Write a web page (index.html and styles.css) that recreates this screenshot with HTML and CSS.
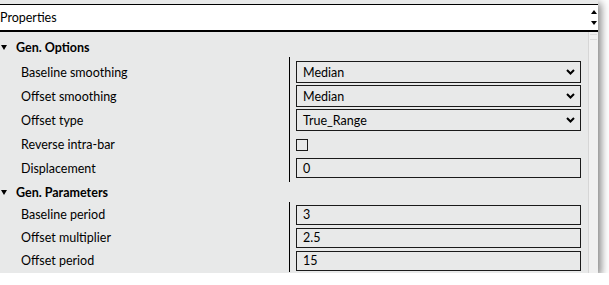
FILE: index.html
```html
<!DOCTYPE html>
<html lang="en">
<head>
    <meta charset="UTF-8">
    <title>Properties</title>
    <link rel="stylesheet" href="styles.css">
</head>
<body>
    <div class="window">
        <div class="top-strip"></div>
        <div class="header">
            <span class="title">Properties</span>
            <div class="spin">
                <span class="arrow-up"></span>
                <span class="arrow-down"></span>
            </div>
        </div>
        <div class="main">
            <div class="grid">
                <div class="group first">
                    <div class="group-head"><span class="tri"></span>Gen. Options</div>
                    <div class="props">
                        <div class="prop">
                            <div class="label">Baseline smoothing</div>
                            <div class="value"><div class="select">Median<svg class="chev" width="9" height="6" viewBox="0 0 9 6"><path d="M1 1 L4.5 4.5 L8 1" fill="none" stroke="#000" stroke-width="2"/></svg></div></div>
                        </div>
                        <div class="prop">
                            <div class="label">Offset smoothing</div>
                            <div class="value"><div class="select">Median<svg class="chev" width="9" height="6" viewBox="0 0 9 6"><path d="M1 1 L4.5 4.5 L8 1" fill="none" stroke="#000" stroke-width="2"/></svg></div></div>
                        </div>
                        <div class="prop">
                            <div class="label">Offset type</div>
                            <div class="value"><div class="select">True_Range<svg class="chev" width="9" height="6" viewBox="0 0 9 6"><path d="M1 1 L4.5 4.5 L8 1" fill="none" stroke="#000" stroke-width="2"/></svg></div></div>
                        </div>
                        <div class="prop">
                            <div class="label">Reverse intra-bar</div>
                            <div class="value"><div class="checkbox"></div></div>
                        </div>
                        <div class="prop">
                            <div class="label">Displacement</div>
                            <div class="value"><div class="textbox">0</div></div>
                        </div>
                    </div>
                </div>
                <div class="group second">
                    <div class="group-head"><span class="tri"></span>Gen. Parameters</div>
                    <div class="props">
                        <div class="prop">
                            <div class="label">Baseline period</div>
                            <div class="value"><div class="textbox">3</div></div>
                        </div>
                        <div class="prop">
                            <div class="label">Offset multiplier</div>
                            <div class="value"><div class="textbox">2.5</div></div>
                        </div>
                        <div class="prop">
                            <div class="label">Offset period</div>
                            <div class="value"><div class="textbox">15</div></div>
                        </div>
                    </div>
                </div>
            </div>
            <div class="scrollbar"><div class="grip"></div></div>
        </div>
    </div>
</body>
</html>
```

FILE: styles.css
```css
body {
    margin: 0;
    background-color: #ffffff;
    font-family: Lato, "Noto Sans", sans-serif;
    font-size: 12.5px;
    color: #000;
}
.window {
    width: 598px;
    height: 273px;
    background-color: #e8e9e9;
    box-shadow: 3px 3px 8px rgba(0, 0, 0, 0.5);
    display: flex;
    flex-direction: column;
    overflow: hidden;
}
.top-strip {
    height: 4px;
}
.header {
    height: 28px;
    box-sizing: border-box;
    background-color: #fff;
    border-top: 1px solid #000;
    border-bottom: 2px solid #000;
    display: flex;
    align-items: center;
    justify-content: space-between;
}
.title {
    margin-left: 0;
    padding-bottom: 1px;
}
.spin {
    display: flex;
    flex-direction: column;
    gap: 7px;
    margin-right: 1px;
}
.arrow-up {
    width: 0;
    height: 0;
    border-left: 3px solid transparent;
    border-right: 3px solid transparent;
    border-bottom: 4px solid #000;
}
.arrow-down {
    width: 0;
    height: 0;
    border-left: 3px solid transparent;
    border-right: 3px solid transparent;
    border-top: 4px solid #000;
}
.main {
    flex: 1;
    display: flex;
}
.grid {
    flex: 1;
}
.group.first {
    margin-top: 5px;
}
.group-head {
    height: 20px;
    display: flex;
    align-items: center;
    font-weight: bold;
}
.tri {
    width: 0;
    height: 0;
    margin: 0 9px 0 1px;
    border-left: 3px solid transparent;
    border-right: 3px solid transparent;
    border-top: 5px solid #000;
}
.props {
    background: linear-gradient(#000, #000) 289px 0 / 1px 100% no-repeat;
}
.first .props {
    padding: 3px 0 2px;
}
.second .props {
    padding-top: 1px;
}
.prop {
    height: 24px;
    display: grid;
    grid-template-columns: 290px 1fr;
    align-items: center;
}
.second .prop {
    height: 23px;
}
.label {
    padding-left: 21px;
}
.value {
    padding: 0 7px 0 6px;
}
.select {
    height: 22px;
    box-sizing: border-box;
    border: 1px solid #1a1a1a;
    display: flex;
    align-items: center;
    justify-content: space-between;
    padding: 0 5px 0 6px;
}
.textbox {
    height: 20px;
    box-sizing: border-box;
    border: 1px solid #1a1a1a;
    display: flex;
    align-items: center;
    padding-left: 6px;
}
.checkbox {
    width: 12px;
    height: 12px;
    box-sizing: border-box;
    border: 1px solid #1a1a1a;
    margin-top: 2px;
}
.scrollbar {
    width: 9px;
    background-color: #f0f0f0;
    border-left: 1px solid #d6d6d6;
}
.grip {
    height: 4px;
    margin: 2px 1px 0;
    border-top: 1px solid #dcdcdc;
    border-bottom: 1px solid #dcdcdc;
}
```
